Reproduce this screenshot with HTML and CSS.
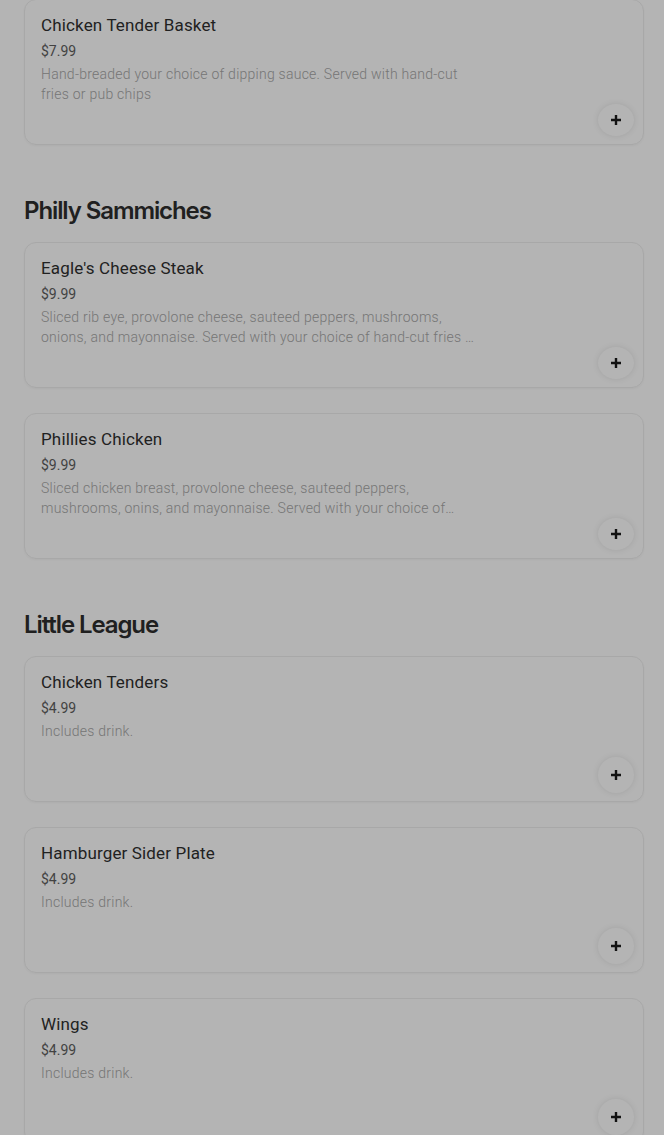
FILE: index.html
```html
<!DOCTYPE html>
<html lang="en">
<head>
  <meta charset="UTF-8" />
  <meta name="viewport" content="width=device-width, initial-scale=1" />
  <title>Menu</title>
  <link rel="stylesheet" href="styles.css">
</head>
<body>

<main class="menu">
  <section class="category">
    <div class="item">
      <div class="info">
        <h3>Chicken Tender Basket</h3>
        <div class="price">$7.99</div>
        <p class="desc">Hand-breaded your choice of dipping sauce. Served with hand-cut fries or pub chips</p>
      </div>
      <button class="add" aria-label="Add"><svg viewBox="0 0 12 12"><path d="M6 1v10M1 6h10"/></svg></button>
    </div>
  </section>

  <section class="category">
    <h2>Philly Sammiches</h2>
    <div class="item">
      <div class="info">
        <h3>Eagle's Cheese Steak</h3>
        <div class="price">$9.99</div>
        <p class="desc">Sliced rib eye, provolone cheese, sauteed peppers, mushrooms, onions, and mayonnaise. Served with your choice of hand-cut fries or pub chips</p>
      </div>
      <button class="add" aria-label="Add"><svg viewBox="0 0 12 12"><path d="M6 1v10M1 6h10"/></svg></button>
    </div>
    <div class="item">
      <div class="info">
        <h3>Phillies Chicken</h3>
        <div class="price">$9.99</div>
        <p class="desc">Sliced chicken breast, provolone cheese, sauteed peppers, mushrooms, onins, and mayonnaise. Served with your choice of hand-cut fries or pub chips</p>
      </div>
      <button class="add" aria-label="Add"><svg viewBox="0 0 12 12"><path d="M6 1v10M1 6h10"/></svg></button>
    </div>
  </section>

  <section class="category">
    <h2>Little League</h2>
    <div class="item">
      <div class="info">
        <h3>Chicken Tenders</h3>
        <div class="price">$4.99</div>
        <p class="desc">Includes drink.</p>
      </div>
      <button class="add" aria-label="Add"><svg viewBox="0 0 12 12"><path d="M6 1v10M1 6h10"/></svg></button>
    </div>
    <div class="item">
      <div class="info">
        <h3>Hamburger Sider Plate</h3>
        <div class="price">$4.99</div>
        <p class="desc">Includes drink.</p>
      </div>
      <button class="add" aria-label="Add"><svg viewBox="0 0 12 12"><path d="M6 1v10M1 6h10"/></svg></button>
    </div>
    <div class="item">
      <div class="info">
        <h3>Wings</h3>
        <div class="price">$4.99</div>
        <p class="desc">Includes drink.</p>
      </div>
      <button class="add" aria-label="Add"><svg viewBox="0 0 12 12"><path d="M6 1v10M1 6h10"/></svg></button>
    </div>
  </section>
</main>

<div class="backdrop"></div>

</body>
</html>
```

FILE: styles.css
```css
html, body {
  overflow: hidden;
}
body {
  font-family: Roboto, 'Liberation Sans', sans-serif;
  background: #fff;
  color: #222;
  margin: 0;
  height: 1135px;
}
.menu {
  padding: 0 20px 0 24px;
}
.category h2 {
  font-family: Inter, 'Liberation Sans', sans-serif;
  font-size: 24px;
  line-height: 32px;
  font-weight: 600;
  letter-spacing: -1.1px;
  color: #2e2e2e;
  margin: 50px 0 15px;
}
.item {
  box-sizing: border-box;
  height: 146px;
  border: 1px solid #eee;
  border-radius: 12px;
  padding: 14px 9px 8px 16px;
  margin-bottom: 25px;
  display: flex;
  flex-direction: column;
  box-shadow: 0 1px 2px rgba(0,0,0,0.04);
}
.item h3 {
  margin: 0;
  font-size: 17px;
  line-height: 22px;
  font-weight: 400;
  letter-spacing: 0.15px;
  color: #303030;
}
.price {
  margin-top: 5px;
  font-size: 14px;
  line-height: 20px;
  color: #5e5e5e;
}
.desc {
  margin: 3px 0 0;
  max-width: 440px;
  font-size: 14px;
  line-height: 20px;
  font-weight: 300;
  letter-spacing: 0.25px;
  color: #a8a8a8;
  display: -webkit-box;
  -webkit-line-clamp: 2;
  -webkit-box-orient: vertical;
  overflow: hidden;
}
.add {
  margin-top: auto;
  align-self: flex-end;
  width: 36px;
  height: 36px;
  border-radius: 50%;
  border: none;
  background: #fff;
  box-shadow: 0 0 6px rgba(0,0,0,0.1);
  display: flex;
  align-items: center;
  justify-content: center;
  padding: 0;
  cursor: pointer;
}
.add svg {
  width: 12px;
  height: 12px;
  stroke: #1a1a1a;
  stroke-width: 2.4;
  fill: none;
}
.category:first-child .item {
  margin-top: -1px;
}
.backdrop {
  position: fixed;
  inset: 0;
  background: rgba(0,0,0,0.295);
}
```
